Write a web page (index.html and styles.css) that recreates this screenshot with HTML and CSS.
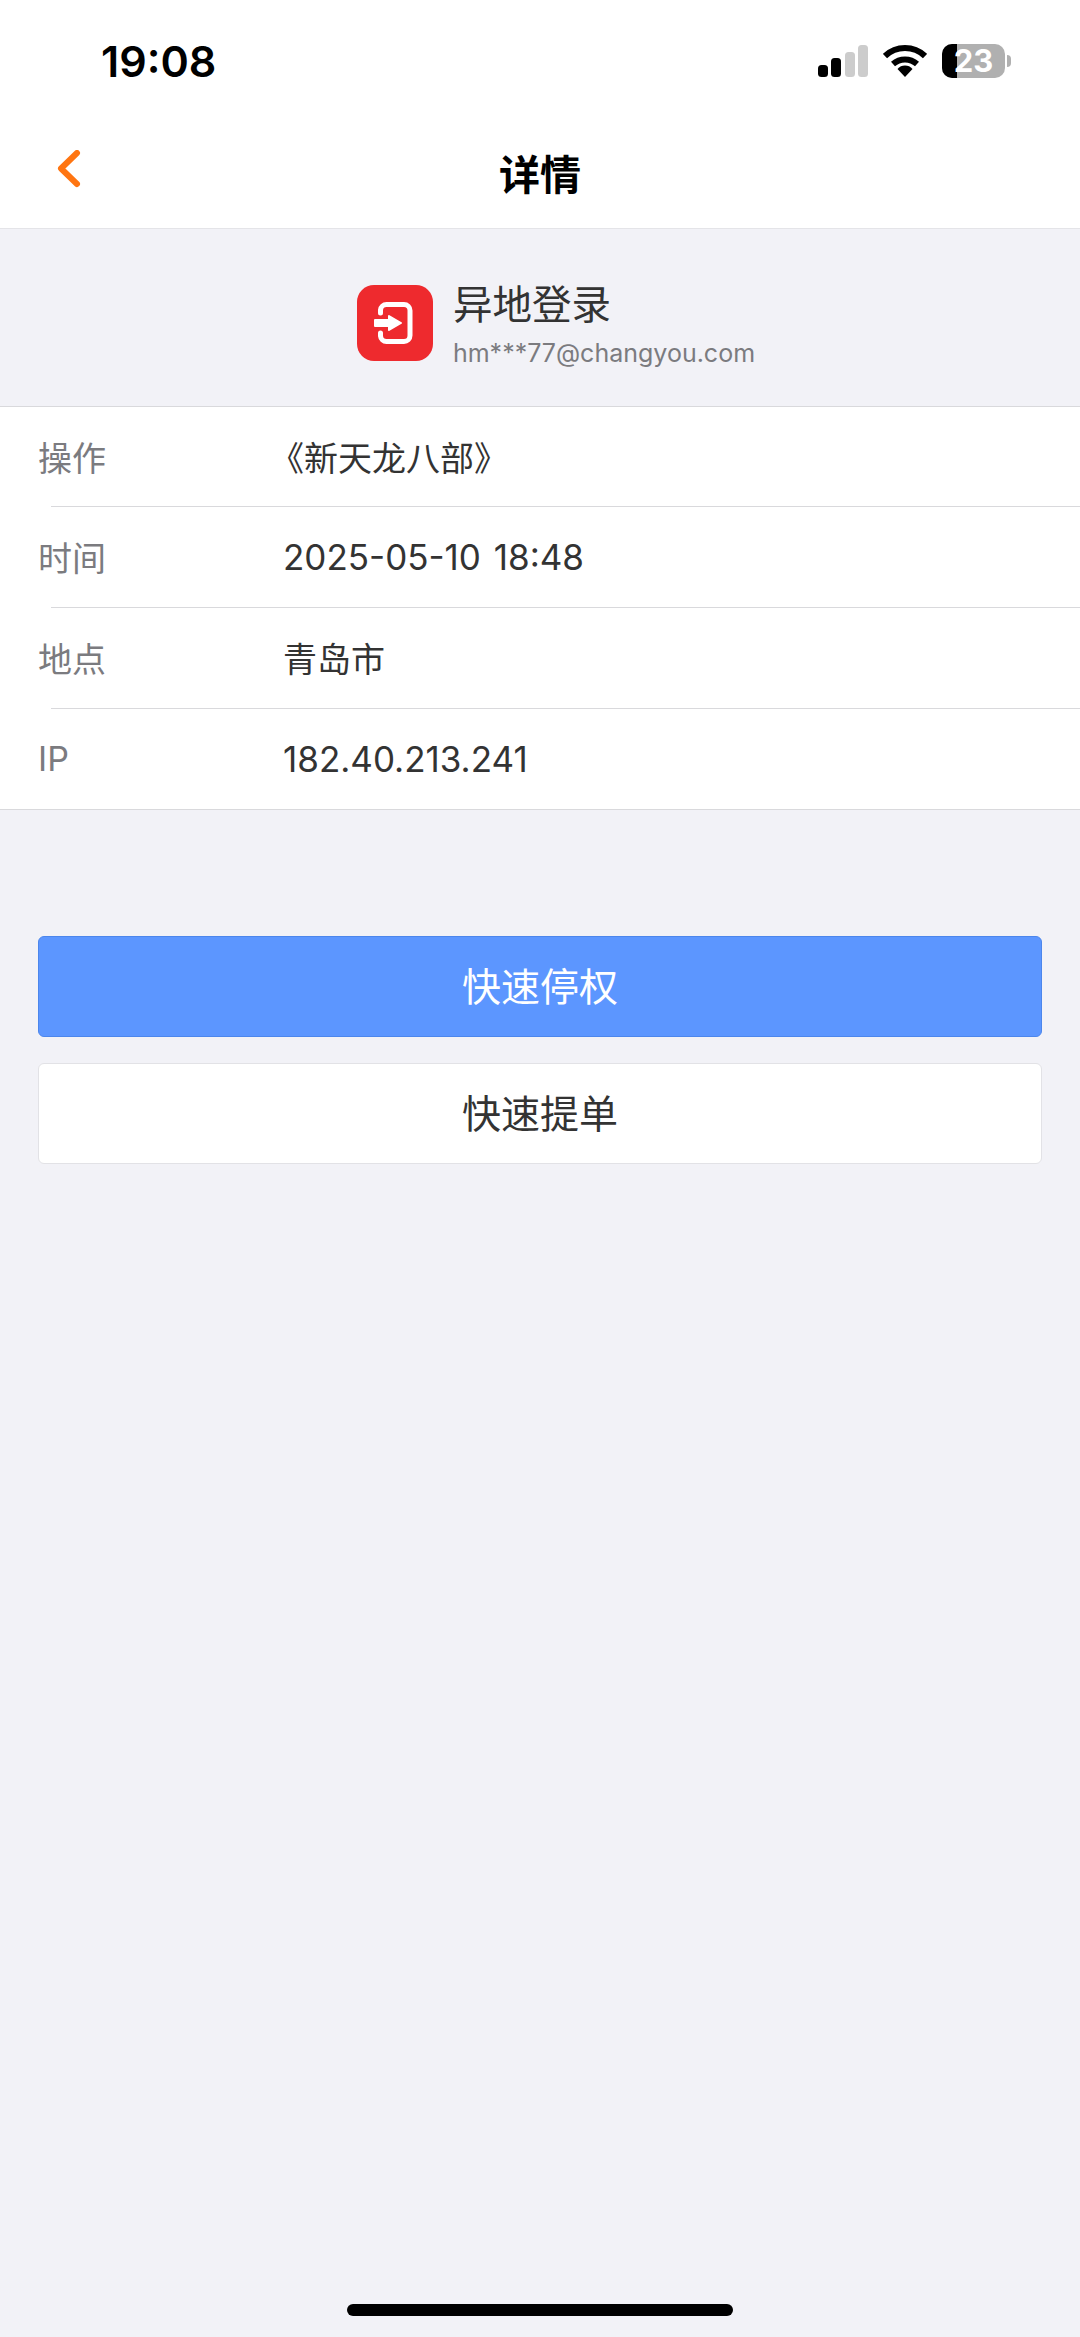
FILE: index.html
```html
<!DOCTYPE html>
<html lang="zh-CN">
<head>
  <meta charset="UTF-8" />
  <meta name="viewport" content="width=device-width, initial-scale=1.0"/>
  <title>详情</title>
  <link rel="stylesheet" href="styles.css">
</head>
<body>
  <div class="statusbar">
    <span class="clock">19:08</span>
    <div class="status-icons">
      <svg class="signal" width="50" height="32" viewBox="0 0 50 32">
        <rect x="0" y="20" width="10" height="12" rx="3.5" fill="#000"/>
        <rect x="13" y="13" width="10" height="19" rx="3.5" fill="#000"/>
        <rect x="27" y="7" width="10" height="25" rx="3.5" fill="#ccc"/>
        <rect x="40" y="0" width="10" height="32" rx="3.5" fill="#ccc"/>
      </svg>
      <svg class="wifi" width="44" height="32" viewBox="0 0 44 32">
        <path d="M2 11 A29 29 0 0 1 42 11" fill="none" stroke="#000" stroke-width="6"/>
        <path d="M10 19 A18 18 0 0 1 34 19" fill="none" stroke="#000" stroke-width="6"/>
        <path d="M14.500 24 A10 10 0 0 1 29.500 24 L22 32 Z" fill="#000"/>
      </svg>
      <div class="battery">
        <div class="battery-body">
          <div class="battery-fill"></div>
          <span class="battery-num">23</span>
        </div>
        <div class="battery-cap"></div>
      </div>
    </div>
  </div>

  <header class="navbar">
    <a class="back" href="#">
      <svg width="26" height="38" viewBox="0 0 26 38">
        <path d="M21 3 L5 18.500 L21 34" fill="none" stroke="#ff7511" stroke-width="6" stroke-linecap="round" stroke-linejoin="round"/>
      </svg>
    </a>
    <h1>详情</h1>
  </header>

  <section class="summary">
    <div class="summary-icon">
      <svg width="44" height="44" viewBox="0 0 44 44">
        <path d="M7.500 12 V9 A6 6 0 0 1 13.500 3.500 H31 A6 6 0 0 1 37 9.500 V34.500 A6 6 0 0 1 31 40.500 H13.500 A6 6 0 0 1 7.500 35 V32" fill="none" stroke="#fff" stroke-width="5" stroke-linecap="round"/>
        <path d="M2 19 H16 V15 L28 22 L16 29 V25 H2 Z" fill="#fff" stroke="#fff" stroke-width="2" stroke-linejoin="round"/>
      </svg>
    </div>
    <div class="summary-text">
      <div class="summary-title">异地登录</div>
      <div class="summary-mail">hm***77@changyou.com</div>
    </div>
  </section>

  <ul class="info-list">
    <li class="info-row"><span class="info-label">操作</span><span class="info-value book">《新天龙八部》</span></li>
    <li class="info-row"><span class="info-label">时间</span><span class="info-value num">2025-05-10 18:48</span></li>
    <li class="info-row"><span class="info-label">地点</span><span class="info-value">青岛市</span></li>
    <li class="info-row"><span class="info-label">IP</span><span class="info-value num">182.40.213.241</span></li>
  </ul>

  <div class="actions">
    <button class="btn btn-primary">快速停权</button>
    <button class="btn">快速提单</button>
  </div>

  <div class="home-bar"></div>
</body>
</html>
```

FILE: styles.css
```css
:root {
  --fundo: #f2f2f7;
  --linha: #d9d9dc;
  --texto: #333;
  --cinza: #7b7b7f;
  --cjk: Inter, "Noto Sans CJK SC", sans-serif;
}
* { box-sizing: border-box; margin: 0; padding: 0; }
body {
  font-family: var(--cjk);
  background: var(--fundo);
  color: var(--texto);
  height: 2337px;
  display: flex;
  flex-direction: column;
  overflow: hidden;
}
.statusbar {
  height: 120px;
  background: #fff;
  display: flex;
  justify-content: space-between;
  align-items: flex-start;
  padding: 35px 69px 0 101px;
}
.clock {
  font-size: 43px;
  line-height: 52px;
  font-weight: 600;
  color: #000;
}
.status-icons {
  display: flex;
  align-items: center;
  gap: 15px;
  padding-top: 9px;
}
.battery {
  display: flex;
  align-items: center;
  gap: 2px;
}
.battery-body {
  width: 63px;
  height: 34px;
  border-radius: 10px;
  background: #b0b0b0;
  display: flex;
  position: relative;
  align-items: center;
  justify-content: center;
}
.battery-fill {
  position: absolute;
  left: 0;
  top: 0;
  bottom: 0;
  width: 15px;
  border-radius: 10px 0 0 10px;
  background: #000;
}
.battery-num {
  position: relative;
  color: #fff;
  font-size: 31px;
  font-weight: 700;
  line-height: 34px;
}
.battery-cap {
  width: 4px;
  height: 12px;
  border-radius: 0 4px 4px 0;
  background: #b0b0b0;
}
.navbar {
  height: 109px;
  background: #fff;
  border-bottom: 1px solid #e4e4e8;
  display: flex;
  align-items: center;
  justify-content: center;
  position: relative;
}
.navbar h1 {
  font-size: 41px;
  font-weight: 700;
  color: #000;
  line-height: 58px;
  padding-top: 2px;
}
.back {
  position: absolute;
  left: 56px;
  top: 30px;
  display: flex;
}
.summary {
  height: 178px;
  border-bottom: 1px solid var(--linha);
  display: flex;
  align-items: center;
  justify-content: center;
  gap: 20px;
  padding: 11px 0 0 32px;
}
.summary-icon {
  width: 76px;
  height: 76px;
  border-radius: 17px;
  background: #ee2a2e;
  display: flex;
  align-items: center;
  justify-content: center;
}
.summary-title {
  font-size: 39.5px;
  line-height: 54px;
  color: var(--texto);
}
.summary-mail {
  font-size: 25px;
  line-height: 32px;
  margin-top: 5px;
  color: var(--cinza);
}
.info-list {
  list-style: none;
  background: #fff;
  border-bottom: 1px solid var(--linha);
}
.info-row {
  height: 101px;
  display: flex;
  align-items: center;
  padding-left: 38px;
  position: relative;
  font-size: 34px;
}
.info-row:first-child {
  height: 99px;
}
.info-row + .info-row::before {
  content: "";
  position: absolute;
  left: 51px;
  right: 0;
  top: 0;
  height: 1px;
  background: var(--linha);
}
.info-label {
  width: 245px;
  color: var(--cinza);
}
.info-value {
  color: var(--texto);
}
.num {
  font-size: 35px;
  word-spacing: 3px;
}
.book {
  margin-left: -13px;
}
.actions {
  display: flex;
  flex-direction: column;
  gap: 26px;
  padding: 126px 38px 0;
}
.btn {
  height: 101px;
  border: 1px solid #e2e2e6;
  border-radius: 6px;
  background: #fff;
  color: var(--texto);
  font-family: var(--cjk);
  font-size: 39px;
  padding-bottom: 6px;
}
.btn-primary {
  background: #5c96ff;
  border-color: #4c86ec;
  color: #fff;
}
.home-bar {
  width: 386px;
  height: 12px;
  border-radius: 6px;
  background: #000;
  margin: auto auto 21px;
}
```
